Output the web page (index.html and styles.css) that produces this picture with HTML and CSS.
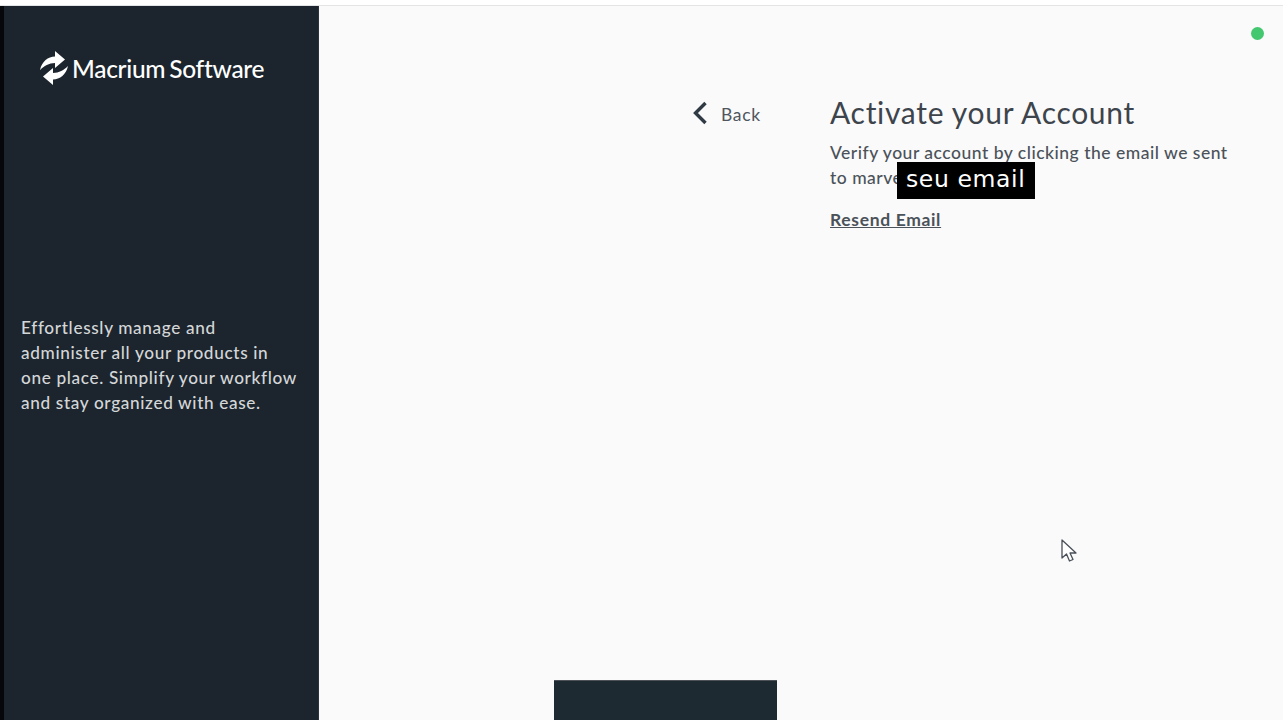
FILE: index.html
```html
<!DOCTYPE html>
<html lang="en">
<head>
<meta charset="utf-8">
<title>Activate your Account</title>
<link rel="stylesheet" href="styles.css">
</head>
<body>
<div class="topline"></div>
<div class="frame">
  <div class="edge"></div>
  <aside class="sidebar">
    <div class="logo">
      <svg class="logo-mark" width="30" height="36" viewBox="0 0 30 36">
        <path fill="#fff" d="M0 20C2 11 8 7 15 6.500L15 1 25 9.500 15 18 15 13C9 13 4 16 0 20z"/>
        <path fill="#fff" d="M28 16C26 25 20 29 13 29.500L13 35 3 26.500 13 18 13 23C19 23 24 20 28 16z"/>
      </svg>
      <span class="logo-text">Macrium</span><span class="logo-text logo-second">Software</span>
    </div>
    <p class="tagline">Effortlessly manage and administer all your products in one place. Simplify your workflow and stay organized with ease.</p>
  </aside>
  <main class="main">
    <div class="status-row"><span class="status-dot"></span></div>
    <div class="content">
      <a class="back">
        <svg class="back-icon" width="16" height="24" viewBox="0 0 16 24"><path d="M13.500 2 3.500 12l10 10" fill="none" stroke="#2f3a44" stroke-width="3.400"/></svg>
        <span>Back</span>
      </a>
      <section class="panel">
        <h1>Activate your Account</h1>
        <p class="verify">Verify your account by clicking the email we sent to marve<span class="mask">seu email</span></p>
        <a class="resend">Resend Email</a>
      </section>
    </div>
    <svg class="cursor" width="18" height="26" viewBox="0 0 18 26"><path d="M2 2v18l4.500-4 3 7 3.500-1.500-3-6.500h6z" fill="#fff" stroke="#4a5058" stroke-width="1.300" stroke-linejoin="round"/></svg>
    <div class="bottom-block"></div>
  </main>
</div>
</body>
</html>
```
FILE: styles.css
```css
* { box-sizing: border-box; }
html, body { margin: 0; height: 100%; overflow: hidden; }
body {
  display: flex;
  flex-direction: column;
  width: 1283px;
  height: 720px;
  background: #fafafb;
  font-family: "Lato", "Liberation Sans", sans-serif;
}
.topline {
  height: 6px;
  flex: none;
  background: #fff;
  border-bottom: 1px solid #e3e4e6;
}
.frame { display: flex; flex: 1; min-height: 0; }
.edge { width: 4px; flex: none; background: #05070a; }
.sidebar {
  width: 315px;
  flex: none;
  background: #1c252d;
  border-right: 1px solid #2b343b;
  padding: 44px 17px 0 17px;
  color: #d4d6d8;
}
.logo {
  display: flex;
  align-items: center;
  height: 36px;
  padding-left: 19px;
  color: #fff;
}
.logo-mark { flex: none; margin-right: 2px; }
.logo-text { font-size: 24.500px; font-weight: 500; letter-spacing: -0.3px; }
.logo-second { margin-left: 4px; }
.tagline {
  margin: 229px 0 0;
  width: 279px;
  font-size: 17.200px;
  line-height: 25px;
  font-weight: 500;
  letter-spacing: 0.65px;
}
.main { position: relative; flex: 1; min-width: 0; padding-top: 21px; }
.status-row { display: flex; justify-content: flex-end; height: 13px; padding-right: 19px; }
.status-dot { width: 13px; height: 13px; border-radius: 50%; background: #43c76f; }
.content { display: flex; margin-top: 55px; padding-left: 374px; }
.back {
  display: flex;
  align-items: center;
  align-self: flex-start;
  gap: 12px;
  width: 137px;
  height: 28px;
  margin-top: 4px;
  margin-left: -1px;
  font-size: 17.500px;
  letter-spacing: 0.7px;
  color: #50565e;
}
.back span { padding-top: 2px; padding-left: 1px; }
.panel { width: 410px; margin-left: 1px; color: #4b5259; }
h1 {
  margin: 0;
  font-size: 30px;
  line-height: 35px;
  font-weight: 400;
  letter-spacing: 0.7px;
  color: #3d444b;
}
.verify {
  position: relative;
  margin: 10px 0 0;
  font-size: 17.500px;
  line-height: 25px;
  font-weight: 500;
  letter-spacing: 0.5px;
}
.mask {
  position: absolute;
  left: 67px;
  top: 22px;
  width: 138px;
  height: 37px;
  padding-left: 9px;
  background: #000;
  color: #fff;
  font-family: "DejaVu Sans", sans-serif;
  font-size: 23.500px;
  line-height: 35px;
  font-weight: 400;
  letter-spacing: 0.6px;
}
.resend {
  display: block;
  margin-top: 19px;
  width: fit-content;
  font-size: 17.500px;
  line-height: 22px;
  font-weight: 700;
  letter-spacing: 0.65px;
  text-decoration: underline;
}
.cursor { position: absolute; left: 741px; top: 532px; }
.bottom-block {
  position: absolute;
  left: 235px;
  top: 674px;
  width: 223px;
  height: 40px;
  background: #1e2a32;
  border-top: 1px solid #4c5257;
}
```
